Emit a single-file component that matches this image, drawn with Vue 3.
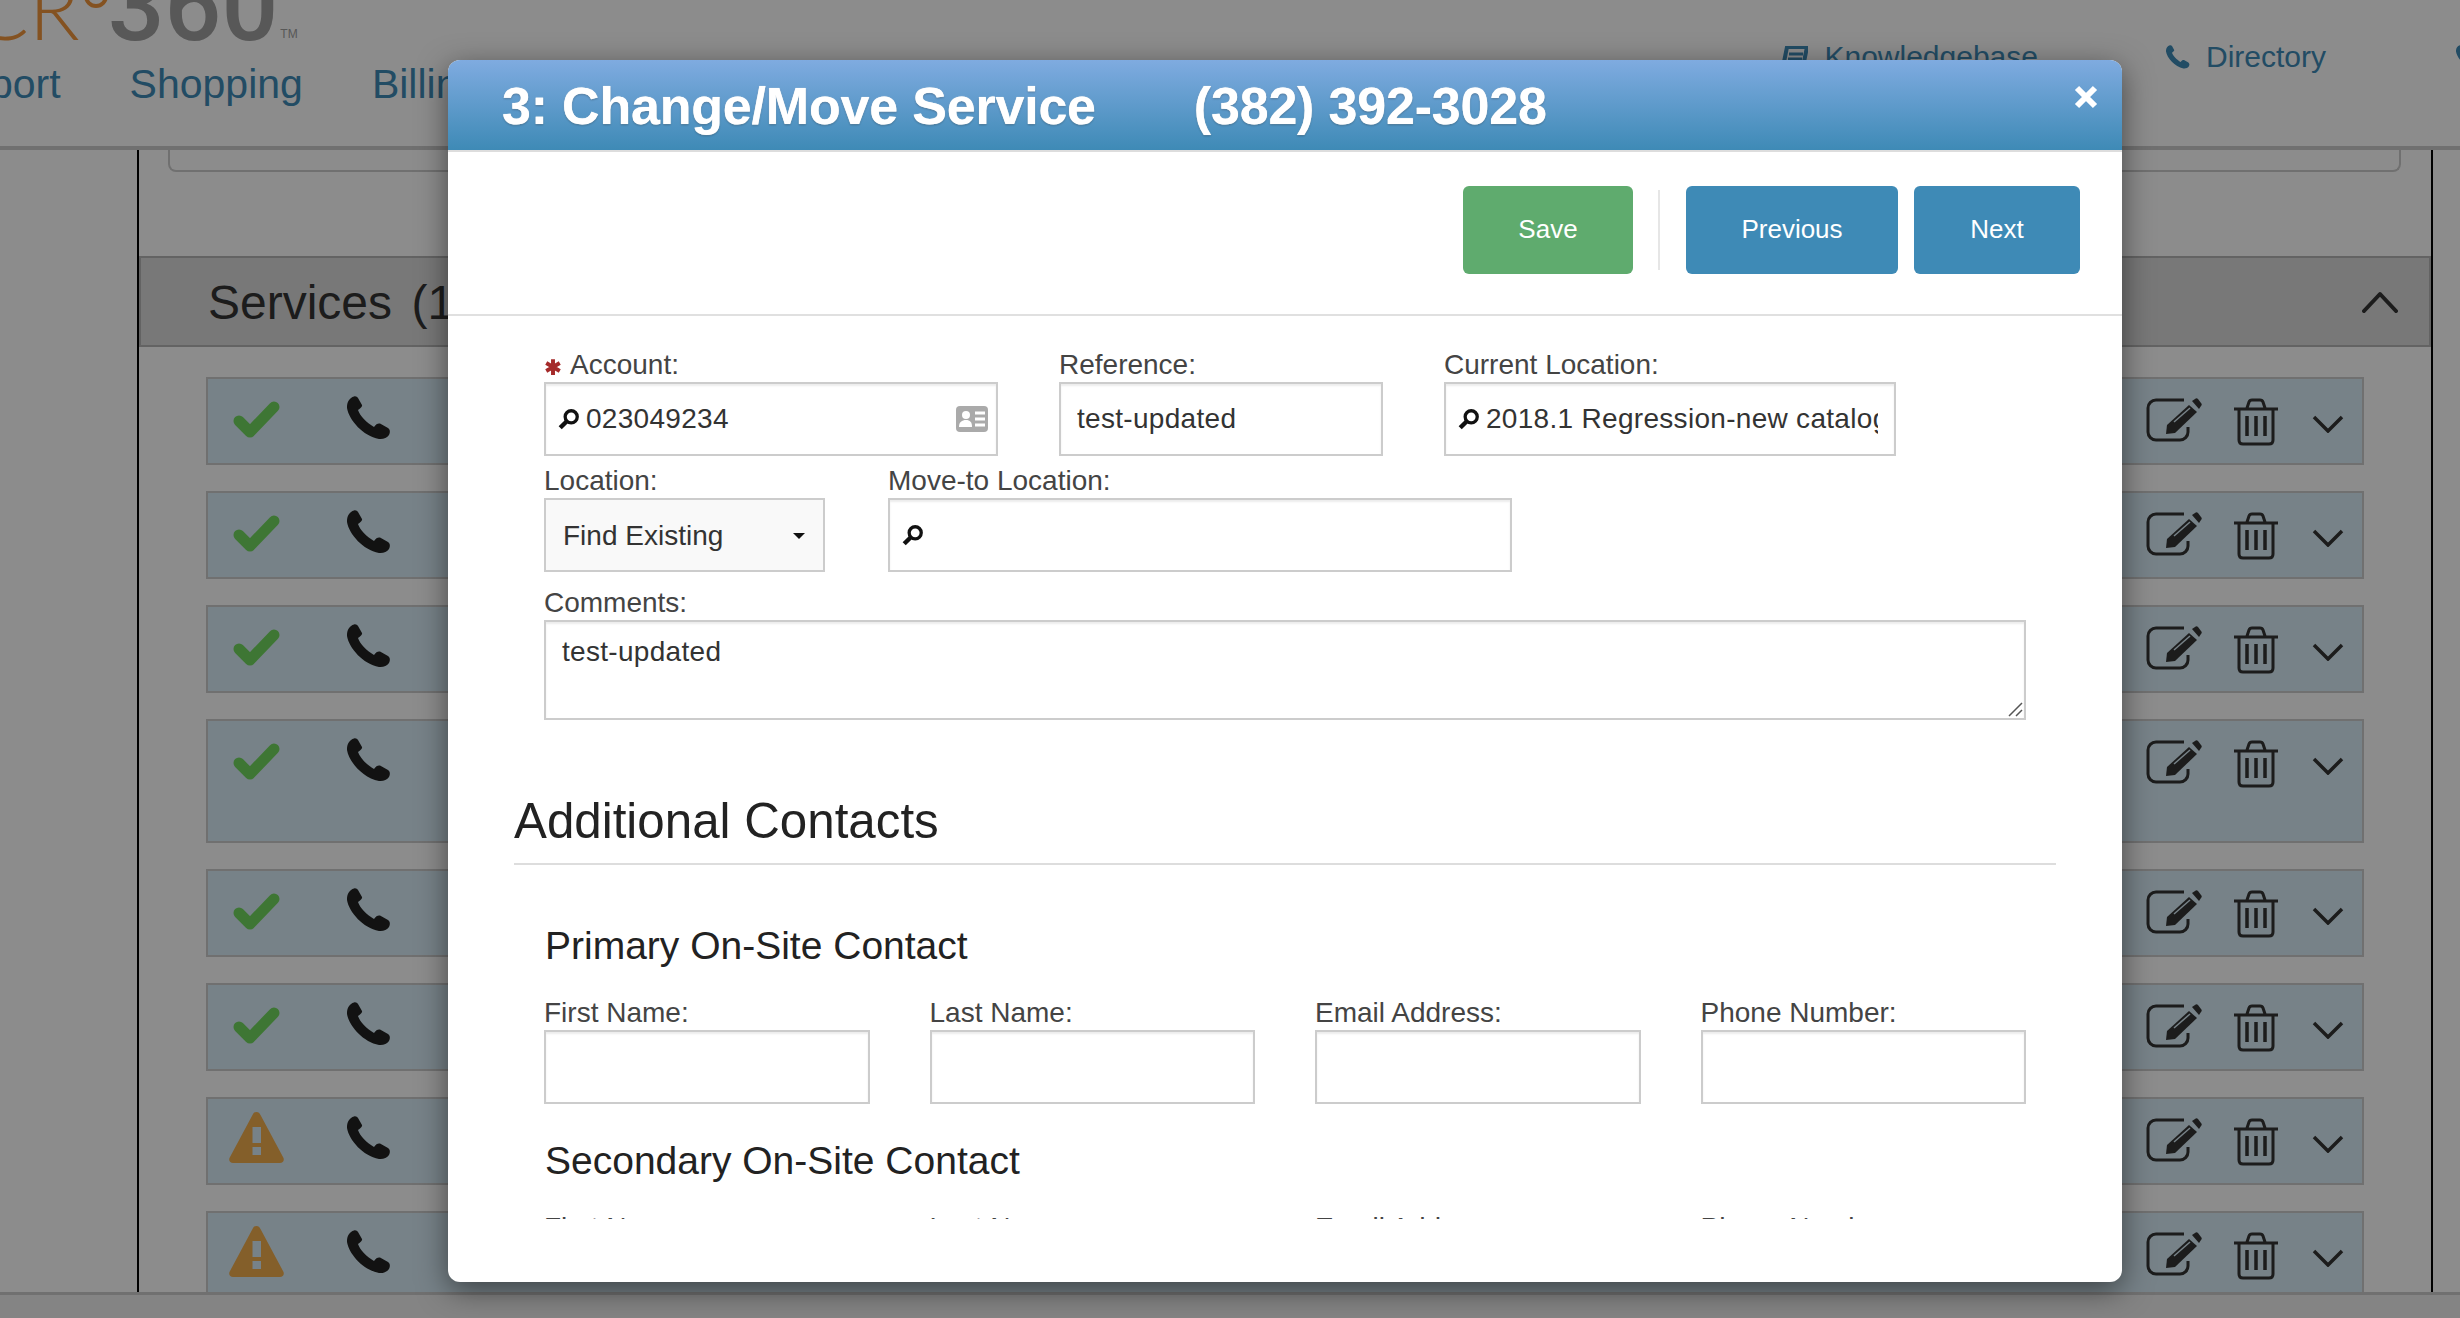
<script setup>
const rows = [
  { kind: 'ok', tall: false }, { kind: 'ok', tall: false }, { kind: 'ok', tall: false },
  { kind: 'ok', tall: true }, { kind: 'ok', tall: false }, { kind: 'ok', tall: false },
  { kind: 'warn', tall: false }, { kind: 'warn', tall: false }
]
const phone = 'M7 .5C9 0 10 1 11 2L15 9C15.5 10.5 14 12 11 14C13 20 20 27 27 31C29 28 31 27 33 27.5L41 32C43 33.5 43.5 36 42 39C40 42 36 43.5 32 43C16 40 2 24 0 12C-.3 7 2 2 7 .5Z'
const contacts = ['First Name:', 'Last Name:', 'Email Address:', 'Phone Number:']
</script>

<template>
  <div class="page">
    <header class="top">
      <div class="top-left">
        <div class="logo">
          <span class="logo-cr">CR</span><span class="logo-dot"></span><span class="logo-num">360</span><span class="logo-tm">TM</span>
        </div>
        <nav class="nav">
          <a>Support</a><a>Shopping</a><a>Billing</a>
        </nav>
      </div>
      <div class="top-right">
        <a class="tool tool-kb">
          <svg width="26" height="22" viewBox="0 0 26 22"><path d="M5 1H25L21 21H1Z" fill="none" stroke="currentColor" stroke-width="4"/><path d="M7 8H21M6 13H20" stroke="currentColor" stroke-width="3"/></svg>
          Knowledgebase
        </a>
        <a class="tool tool-dir">
          <svg width="24" height="24" viewBox="0 0 44 44"><path :d="phone" fill="currentColor"/></svg>
          Directory
        </a>
        <a class="tool tool-user"><svg width="24" height="24" viewBox="0 0 44 44"><path :d="phone" fill="currentColor"/></svg></a>
      </div>
    </header>

    <main class="main">
      <div class="filter-box"></div>
      <div class="bar">
        <h2 class="bar-title">Services (14)</h2>
        <svg class="bar-chev" width="36" height="22" viewBox="0 0 36 22"><path d="M2 20L18 3L34 20" fill="none" stroke="#333" stroke-width="4" stroke-linecap="round" stroke-linejoin="round"/></svg>
      </div>
      <div class="rows">
        <div v-for="(r, i) in rows" :key="i" class="row" :class="{ tall: r.tall }">
          <svg v-if="r.kind === 'ok'" class="ic-status" width="55" height="51" viewBox="-4 -7 55 51"><path d="M6 20L17 31L41 6" fill="none" stroke="#72d85f" stroke-width="11" stroke-linecap="round" stroke-linejoin="round"/></svg>
          <svg v-else class="ic-status warn" width="55" height="51" viewBox="0 0 55 51"><path fill-rule="evenodd" fill="#f0ad4e" d="M27.5 0C29.5 0 30.5 1 31.5 3L54 45C56 48 54 51 51 51H4C1 51-1 48 1 45L23.5 3C24.5 1 25.5 0 27.5 0ZM23.5 15V31H32V15ZM23.5 35V43H32V35Z"/></svg>
          <svg class="ic-phone" width="44" height="44" viewBox="0 0 44 44"><path :d="phone" fill="#222"/></svg>
          <span class="spacer"></span>
          <svg class="ic-edit" width="56" height="44" viewBox="0 0 56 44">
            <path d="M38 2H10a8 8 0 0 0-8 8V34a8 8 0 0 0 8 8H34a8 8 0 0 0 8-8V29" fill="none" stroke="#333" stroke-width="3"/>
            <path d="M20 36L21 27L43 7L51 14L29 35Z" fill="#333"/>
            <path d="M46 3L49 1C50 0 51 0 52 1L55 5C56 6 56 7 55 8L53 11Z" fill="#333"/>
            <path d="M28 24L44 10" stroke="#d9edf7" stroke-width="1.5"/>
          </svg>
          <svg class="ic-trash" width="44" height="48" viewBox="0 0 44 48">
            <path d="M0 11H44M13 10L15 4C15.500 2.500 17 2 18 2H26C27 2 28.500 2.500 29 4L31 10M5 11V42C5 44.500 6.500 46 9 46H35C37.500 46 39 44.500 39 42V11" fill="none" stroke="#333" stroke-width="3"/>
            <path d="M13 18V38M22 18V38M31 18V38" stroke="#333" stroke-width="3.500"/>
          </svg>
          <svg class="ic-chev" width="32" height="18" viewBox="0 0 32 18"><path d="M2 2L16 16L30 2" fill="none" stroke="#333" stroke-width="3.500"/></svg>
        </div>
      </div>
    </main>

    <footer class="foot"></footer>

    <div class="overlay">
      <section class="modal">
        <div class="modal-head">
          <h1 class="modal-title"><span>3: Change/Move Service</span><span>(382) 392-3028</span></h1>
          <svg class="close" width="24" height="24" viewBox="0 0 24 24"><path d="M3 3L21 21M21 3L3 21" stroke="#fff" stroke-width="6"/></svg>
        </div>
        <div class="toolbar">
          <button class="btn btn-save">Save</button>
          <span class="divider"></span>
          <button class="btn btn-prev">Previous</button>
          <button class="btn btn-next">Next</button>
        </div>
        <div class="body">
          <div class="form-row">
            <div class="field w-account">
              <label class="lab">
                <svg class="star" width="18" height="18" viewBox="0 0 16 16"><path d="M8 1V15M2 4.500L14 11.500M14 4.500L2 11.500" stroke="#a52a2a" stroke-width="3.500"/></svg>
                Account:
              </label>
              <div class="input-wrap">
                <svg class="mag" width="22" height="22" viewBox="0 0 20 20"><circle cx="12" cy="8" r="5.500" fill="#fff" stroke="#111" stroke-width="3"/><path d="M8 12L2 18" stroke="#111" stroke-width="4"/></svg>
                <input class="inp with-mag" value="023049234" />
                <svg class="idcard" width="32" height="26" viewBox="0 0 32 26">
                  <rect width="32" height="26" rx="4" fill="#aaa"/>
                  <circle cx="10" cy="9" r="4" fill="#fff"/>
                  <path d="M3 21C3 16 6 14 10 14S16 16 16 21Z" fill="#fff"/>
                  <path d="M19 7H29M19 13H29M19 19H29" stroke="#fff" stroke-width="3"/>
                </svg>
              </div>
            </div>
            <div class="field w-ref">
              <label class="lab">Reference:</label>
              <input class="inp" value="test-updated" />
            </div>
            <div class="field w-cur">
              <label class="lab">Current Location:</label>
              <div class="input-wrap">
                <svg class="mag" width="22" height="22" viewBox="0 0 20 20"><circle cx="12" cy="8" r="5.500" fill="#fff" stroke="#111" stroke-width="3"/><path d="M8 12L2 18" stroke="#111" stroke-width="4"/></svg>
                <input class="inp with-mag" value="2018.1 Regression-new catalog" />
              </div>
            </div>
          </div>
          <div class="form-row row-2">
            <div class="field w-loc">
              <label class="lab">Location:</label>
              <div class="select"><span>Find Existing</span><i class="caret"></i></div>
            </div>
            <div class="field w-move">
              <label class="lab">Move-to Location:</label>
              <div class="input-wrap">
                <svg class="mag" width="22" height="22" viewBox="0 0 20 20"><circle cx="12" cy="8" r="5.500" fill="#fff" stroke="#111" stroke-width="3"/><path d="M8 12L2 18" stroke="#111" stroke-width="4"/></svg>
                <input class="inp with-mag" value="" />
              </div>
            </div>
          </div>
          <div class="field w-full row-3">
            <label class="lab">Comments:</label>
            <div class="input-wrap">
              <textarea class="area" rows="2">test-updated</textarea>
              <svg class="grip" width="16" height="16" viewBox="0 0 16 16"><path d="M2 15L15 2M9 15L15 9" stroke="#555" stroke-width="1.500"/></svg>
            </div>
          </div>

          <h2 class="section">Additional Contacts</h2>

          <h3 class="sub sub-first">Primary On-Site Contact</h3>
          <div class="contact-grid">
            <div v-for="c in contacts" :key="c" class="field">
              <label class="lab">{{ c }}</label>
              <input class="inp" value="" />
            </div>
          </div>

          <h3 class="sub sub-second">Secondary On-Site Contact</h3>
          <div class="contact-grid">
            <div v-for="c in contacts" :key="c" class="field">
              <label class="lab">{{ c }}</label>
              <input class="inp" value="" />
            </div>
          </div>
        </div>
      </section>
    </div>
  </div>
</template>

<style>
html, body { margin: 0; height: 100%; overflow: hidden; }
</style>

<style scoped>
* { box-sizing: border-box; }
.page {
  width: 2460px; height: 1318px; display: flex; flex-direction: column;
  background: #fff; overflow: hidden; position: relative;
  font-family: "Liberation Sans", Arial, sans-serif; color: #333;
}
.top {
  flex: 0 0 150px; display: flex; justify-content: space-between; overflow: hidden;
  background: #fff; border-bottom: 4px solid #ccc;
}
.logo { display: flex; align-items: baseline; height: 100px; margin-top: -44px; line-height: 100px; margin-left: -28px; }
.logo-cr { font-family: Lato, "Liberation Sans", sans-serif; font-weight: 300; font-size: 84px; color: #f0963c; }
.logo-dot { width: 24px; height: 24px; border: 4px solid #f0963c; border-radius: 50%; margin: 28px 0 0 4px; align-self: flex-start; }
.logo-num { font-family: Roboto, "Liberation Sans", sans-serif; font-size: 100px; color: #a0a0a0; font-weight: 500; }
.logo-tm { font-size: 12px; color: #a0a0a0; margin-left: 2px; align-self: flex-start; margin-top: 72px; line-height: 12px; }
.nav { display: flex; gap: 69px; margin: 4px 0 0 -83px; font-size: 41px; line-height: 48px; color: #3e8ab6; }
.top-right { display: flex; align-items: center; height: 114px; color: #3e8ab6; font-size: 30px; }
.tool { display: flex; align-items: center; gap: 16px; white-space: nowrap; }
.tool-kb { margin-right: 128px; }
.tool-dir { margin-right: 130px; }
.tool-user { margin-right: -20px; }

.main {
  flex: 1; min-height: 0; overflow: hidden;
  margin: 0 27px 0 137px; border-left: 2px solid #000; border-right: 2px solid #000; background: #fff;
}
.filter-box { height: 22px; margin: 0 30px 0 29px; border: 2px solid #ccc; border-top: 0; border-radius: 0 0 8px 8px; }
.bar {
  height: 91px; margin-top: 84px; background: #dadada; border: 2px solid #b4b4b4;
  display: flex; align-items: center; justify-content: space-between; padding: 0 31px 0 67px;
}
.bar-title { margin: 2px 0 0; font-weight: 400; font-size: 48px; word-spacing: 6px; color: #333; }
.rows { margin: 30px 67px 0 67px; display: flex; flex-direction: column; gap: 26px; }
.row {
  flex: 0 0 88px; height: 88px; background: #d9edf7; border: 2px solid #ccc;
  display: flex; align-items: flex-start; padding: 13px 18px 0 21px;
}
.row.tall { flex-basis: 124px; height: 124px; }
.ic-status { display: block; margin-top: 2px; }
.ic-status.warn { margin-top: 0; }
.ic-phone { margin-left: 63px; margin-top: 4px; }
.spacer { flex: 1; }
.ic-edit { margin-top: 6px; }
.ic-trash { margin-left: 32px; margin-top: 6px; }
.ic-chev { margin-left: 34px; margin-top: 23px; }

.foot { flex: 0 0 26px; background: #f0f0f0; border-top: 3px solid #ccc; }

.overlay { position: absolute; inset: 0; background: rgba(0, 0, 0, .45); }
.modal {
  position: absolute; left: 448px; top: 60px; width: 1674px; height: 1222px;
  background: #fff; border-radius: 12px; overflow: hidden; box-shadow: 0 8px 30px rgba(0, 0, 0, .5);
}
.modal-head {
  height: 92px; border-bottom: 2px solid #ddd; background: linear-gradient(#7fabe0, #3e8ab6);
  position: relative; padding-left: 54px; display: flex; align-items: center;
}
.modal-title {
  margin: 2px 0 0; display: flex; gap: 98px; font-size: 52px; line-height: 90px; color: #fff; font-weight: 700;
  letter-spacing: -.2px; text-shadow: 0 0 1px #fff, 0 1px 2px rgba(0, 0, 0, .3);
}
.close { position: absolute; top: 25px; right: 24px; }
.toolbar {
  height: 164px; border-bottom: 2px solid #e0e0e0; display: flex; align-items: flex-start;
  justify-content: flex-end; padding: 34px 42px 0 0;
}
.btn {
  height: 88px; border: 0; border-radius: 6px; color: #fff; font: 26px "Liberation Sans", Arial, sans-serif; padding: 0 0 2px;
}
.btn-save { width: 170px; background: #5fab6e; }
.btn-prev { width: 212px; background: #3e8ab6; margin-right: 16px; }
.btn-next { width: 166px; background: #3e8ab6; }
.divider { width: 2px; height: 80px; margin: 4px 26px 0 25px; background: #e6e6e6; }

.body { height: 903px; overflow: hidden; padding: 30px 96px 0 96px; }
.form-row { display: flex; gap: 61px; }
.row-2 { margin-top: 6px; gap: 63px; }
.row-3 { margin-top: 12px; }
.field { display: flex; flex-direction: column; min-width: 0; }
.w-account { width: 454px; }
.w-ref { width: 324px; }
.w-cur { width: 452px; }
.w-loc { width: 281px; }
.w-move { width: 624px; }
.w-full { width: 1482px; }
.lab { height: 36px; padding-top: 2px; font-size: 28px; line-height: 36px; color: #444; display: flex; align-items: center; gap: 8px; white-space: nowrap; }
.star { margin-top: 3px; }
.input-wrap { position: relative; }
.inp {
  display: block; width: 100%; height: 74px; border: 2px solid #ccc; padding: 0 16px; margin: 0; outline: 0;
  font: 28px "Liberation Sans", Arial, sans-serif; letter-spacing: .3px; color: #333; background: #fff; border-radius: 0;
  box-shadow: inset 0 2px 2px rgba(0, 0, 0, .075);
}
.with-mag { padding-left: 40px; }
.mag { position: absolute; left: 14px; top: 26px; }
.idcard { position: absolute; right: 10px; top: 24px; }
.select {
  height: 74px; border: 2px solid #ccc; background: #f9f9f9; padding: 2px 14px 0 17px;
  display: flex; align-items: center; justify-content: space-between; font-size: 28px; color: #333;
}
.caret { width: 0; height: 0; border: 6px solid transparent; border-top: 6px solid #111; border-bottom: 0; margin-right: 4px; }
.area {
  display: block; width: 100%; height: 100px; border: 2px solid #ccc; padding: 14px 16px; margin: 0; outline: 0; resize: none;
  font: 28px "Liberation Sans", Arial, sans-serif; letter-spacing: .3px; color: #333; background: #fff; border-radius: 0;
  box-shadow: inset 0 2px 2px rgba(0, 0, 0, .075);
}
.grip { position: absolute; right: 3px; bottom: 3px; }
.section {
  margin: 71px -30px 0 -30px; height: 74px; line-height: 60px; font-size: 49.3px; font-weight: 400; color: #222;
  border-bottom: 2px solid #ddd; padding-bottom: 14px;
}
.sub { margin: 0; padding-left: 1px; font-size: 39px; line-height: 48px; font-weight: 400; color: #222; }
.sub-first { margin-top: 57px; margin-bottom: 24px; }
.sub-second { margin-top: 33px; margin-bottom: 24px; }
.contact-grid { display: grid; grid-template-columns: repeat(4, 1fr); column-gap: 60px; }
</style>
